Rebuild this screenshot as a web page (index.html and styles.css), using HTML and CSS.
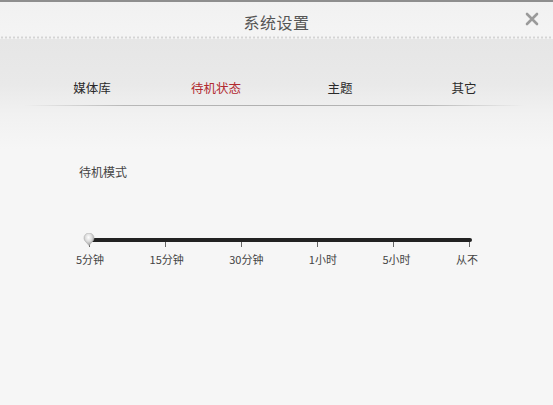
FILE: index.html
```html
<!DOCTYPE html>
<html lang="zh">
<head>
<meta charset="utf-8">
<link rel="stylesheet" href="styles.css">
</head>
<body>
<div class="window">
  <div class="top-line"></div>
  <div class="header">
    <div class="title">系统设置</div>
    <div class="close">
      <svg width="14" height="14" viewBox="0 0 14 14"><path d="M2 2 L12 12 M12 2 L2 12" stroke="#9a9a9a" stroke-width="2.6" stroke-linecap="round"/></svg>
    </div>
  </div>
  <div class="dots"></div>
  <div class="main">
    <div class="tabs-area">
      <div class="tabs">
        <div class="tab">媒体库</div>
        <div class="tab active">待机状态</div>
        <div class="tab">主题</div>
        <div class="tab">其它</div>
      </div>
      <div class="tab-line"></div>
    </div>
    <div class="content">
      <div class="label">待机模式</div>
      <div class="slider">
        <div class="track">
          <div class="thumb">
            <svg width="12" height="13" viewBox="0 0 12 13">
              <defs>
                <radialGradient id="tg" cx="45%" cy="35%" r="65%">
                  <stop offset="0" stop-color="#ffffff"/>
                  <stop offset="0.5" stop-color="#dcdcdc"/>
                  <stop offset="1" stop-color="#9c9c9c"/>
                </radialGradient>
              </defs>
              <path d="M6 12.5 L3 9 A5 5 0 1 1 9 9 Z" fill="url(#tg)" stroke="#b0b0b0" stroke-width="0.6"/>
            </svg>
          </div>
        </div>
        <div class="ticks">
          <span class="tick"></span><span class="tick"></span><span class="tick"></span><span class="tick"></span><span class="tick"></span><span class="tick"></span>
        </div>
        <div class="marks">
          <span class="mark">5分钟</span>
          <span class="mark">15分钟</span>
          <span class="mark">30分钟</span>
          <span class="mark">1小时</span>
          <span class="mark">5小时</span>
          <span class="mark">从不</span>
        </div>
      </div>
    </div>
  </div>
</div>
</body>
</html>
```
FILE: styles.css
```css
html, body {
  margin: 0;
  padding: 0;
  background: #f6f6f6;
}
body {
  font-family: "Noto Sans CJK SC", "Noto Sans", sans-serif;
  width: 553px;
  height: 405px;
  overflow: hidden;
}
.window {
  width: 553px;
  height: 405px;
  display: flex;
  flex-direction: column;
}
.top-line {
  height: 2px;
  background: #8e8e8e;
}
.header {
  position: relative;
  height: 34px;
  background: linear-gradient(to bottom, #f1f1f1, #f4f4f4);
  display: flex;
  align-items: center;
  justify-content: center;
}
.title {
  font-size: 16px;
  color: #555;
  line-height: 20px;
  margin-top: 6px;
  letter-spacing: 0.5px;
}
.close {
  position: absolute;
  right: 14px;
  top: 10px;
  width: 14px;
  height: 14px;
}
.close svg { display: block; }
.dots {
  height: 3px;
  background-color: #f4f4f4;
  background-image: radial-gradient(circle, #d4d4d4 0.9px, transparent 1.3px);
  background-size: 4px 3px;
}
.main {
  flex: 1;
  background: linear-gradient(to bottom, #e6e6e6 0, #e9e9e9 45px, #f1f1f1 75px, #f6f6f6 110px, #f6f6f6 100%);
}
.tabs-area {
  padding-top: 40px;
  padding-bottom: 14px;
}
.tabs {
  display: grid;
  grid-template-columns: repeat(4, 124px);
  margin-left: 30px;
}
.tab {
  text-align: center;
  font-size: 12.5px;
  line-height: 18px;
  color: #2a2a2a;
  font-weight: 400;
}
.tab.active {
  color: #b22a30;
}
.tab-line {
  margin: 8px 28px 0 24px;
  height: 1px;
  background: linear-gradient(to right, rgba(180,180,180,0) 0, #b8b8b8 20%, #b0b0b0 50%, #b8b8b8 80%, rgba(180,180,180,0) 100%);
}
.content {
  padding: 44px 0 0 79px;
}
.label {
  font-size: 12px;
  line-height: 16px;
  color: #444;
}
.slider {
  margin-top: 58px;
  margin-left: 9px;
  width: 384px;
}
.track {
  position: relative;
  height: 4px;
  background: #222;
  border-radius: 2px;
}
.thumb {
  position: absolute;
  left: -5px;
  top: -5px;
  width: 12px;
  height: 13px;
}
.thumb svg { display: block; }
.ticks {
  display: flex;
  justify-content: space-between;
  padding: 0 2px 0 1px;
  height: 5px;
}
.tick {
  width: 1px;
  height: 5px;
  background: #666;
}
.marks {
  display: flex;
  justify-content: space-between;
  margin: 5px -6px 0 -12px;
}
.mark {
  font-size: 11px;
  line-height: 14px;
  color: #444;
}
```
